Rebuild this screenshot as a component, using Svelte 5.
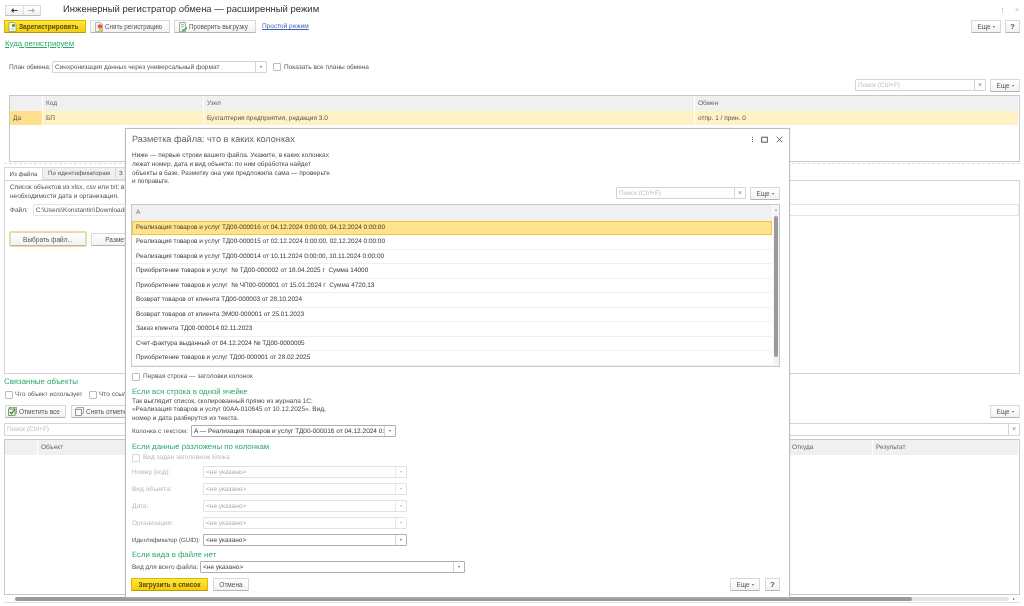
<script>
  const rows = [
    'Реализация товаров и услуг ТД00-000016 от 04.12.2024 0:00:00, 04.12.2024 0:00:00',
    'Реализация товаров и услуг ТД00-000015 от 02.12.2024 0:00:00, 02.12.2024 0:00:00',
    'Реализация товаров и услуг ТД00-000014 от 10.11.2024 0:00:00, 10.11.2024 0:00:00',
    'Приобретение товаров и услуг  № ТД00-000002 от 18.04.2025 г  Сумма 14000',
    'Приобретение товаров и услуг  № ЧП00-000001 от 15.01.2024 г  Сумма 4720,13',
    'Возврат товаров от клиента ТД00-000003 от 28.10.2024',
    'Возврат товаров от клиента ЭМ00-000001 от 25.01.2023',
    'Заказ клиента ТД00-000014 02.11.2023',
    'Счет-фактура выданный от 04.12.2024 № ТД00-0000005',
    'Приобретение товаров и услуг ТД00-000001 от 28.02.2025'
  ];
  const disabledFields = ['Номер (код):', 'Вид объекта:', 'Дата:', 'Организация:'];
</script>

<div class="page">
  <header class="top">
    <div class="nav">
      <span class="nav-btn"><svg width="7" height="5" viewBox="0 0 9 6"><path d="M8.500 3H1.500M3.500 .7 1 3l2.500 2.300" fill="none" stroke="#333" stroke-width="1.300"/></svg></span>
      <span class="nav-btn"><svg width="7" height="5" viewBox="0 0 9 6"><path d="M.5 3h7M5.500 .7 8 3 5.500 5.300" fill="none" stroke="#aaa" stroke-width="1.300"/></svg></span>
    </div>
    <h1>Инженерный регистратор обмена — расширенный режим</h1>
    <span class="spacer"></span>
    <span class="kebab"><i></i><i></i><i></i></span>
    <span class="close-small">×</span>
  </header>

  <div class="toolbar">
    <button class="btn primary reg">
      <svg width="9" height="10" viewBox="0 0 9 10"><path d="M1 .5h5l2 2v7H1z" fill="#fff" stroke="#7a9a5a" stroke-width=".7"/><circle cx="5.500" cy="3.500" r="1.800" fill="#5aa84a"/><path d="M2.500 6.500h4M2.500 8h4" stroke="#bbb" stroke-width=".7"/></svg>
      Зарегистрировать
    </button>
    <button class="btn unreg">
      <svg width="10" height="10" viewBox="0 0 10 10"><path d="M1.500 .5h5l2 2v7h-7z" fill="#f4f4f4" stroke="#999" stroke-width=".7"/><circle cx="6" cy="4.500" r="2.200" fill="#e0573a"/><circle cx="6.500" cy="7.500" r="1.700" fill="#f0c040"/></svg>
      Снять регистрацию
    </button>
    <button class="btn check">
      <svg width="10" height="10" viewBox="0 0 10 10"><path d="M1.500 .5h6v9h-6z" fill="#f4f4f4" stroke="#888" stroke-width=".7"/><path d="M3 2.500h3M3 4.500h3" stroke="#999" stroke-width=".7"/><path d="M4 7l1.500 1.700L9 5.500" fill="none" stroke="#3b9b3b" stroke-width="1.100"/></svg>
      Проверить выгрузку
    </button>
    <a class="simple">Простой режим</a>
    <span class="spacer"></span>
    <button class="btn more">Еще <b class="caret"></b></button>
    <button class="btn help">?</button>
  </div>

  <div class="where">Куда регистрируем</div>

  <div class="plan">
    <span class="lbl plan-lbl">План обмена:</span>
    <div class="field plan-field"><span>Синхронизация данных через универсальный формат</span><b class="drop"><i class="caret"></i></b></div>
    <span class="cb"></span>
    <span class="lbl">Показать все планы обмена</span>
  </div>

  <div class="search-row">
    <div class="field search"><span>Поиск (Ctrl+F)</span><b class="drop x">×</b></div>
    <button class="btn more">Еще <b class="caret"></b></button>
  </div>

  <div class="grid-box plans">
    <div class="g-head">
      <span class="c0"></span><span class="c1">Код</span><span class="c2">Узел</span><span class="c3">Обмен</span>
    </div>
    <div class="g-row">
      <span class="c0 mark">Да</span><span class="c1">БП</span><span class="c2">Бухгалтерия предприятия, редакция 3.0</span><span class="c3">отпр. 1 / прин. 0</span>
    </div>
  </div>

  <div class="dash"></div>

  <div class="tabs">
    <span class="tab on">Из файла</span>
    <span class="tab">По идентификаторам</span>
    <span class="tab">З</span>
  </div>
  <section class="panel">
    <p>Список объектов из xlsx, csv или txt: в<br>необходимости дата и организация.</p>
    <div class="file-row">
      <span class="lbl">Файл:</span>
      <div class="field file"><span>C:\Users\Konstantin\Downloads\</span></div>
    </div>
    <div class="file-btns">
      <button class="btn pick">Выбрать файл...</button>
      <button class="btn mark-up">Разметить</button>
    </div>
  </section>

  <div class="linked">Связанные объекты</div>
  <div class="checks">
    <span class="cb"></span><span class="lbl w1">Что объект использует</span>
    <span class="cb"></span><span class="lbl">Что ссылается</span>
  </div>
  <div class="bar3">
    <button class="btn mark-all">
      <svg width="9" height="9" viewBox="0 0 9 9"><rect x="1.500" y=".5" width="7" height="6" fill="#d8ead0" stroke="#6b8f5a" stroke-width=".7"/><rect x=".5" y="2" width="6.500" height="6.500" fill="#eef5e8" stroke="#557a45" stroke-width=".7"/><path d="M2 5l1.500 1.700L7 2" fill="none" stroke="#2f8f2f" stroke-width="1.200"/></svg>
      Отметить все
    </button>
    <button class="btn un-all">
      <svg width="9" height="9" viewBox="0 0 9 9"><rect x="2" y=".5" width="6.500" height="6" fill="#f2f2f2" stroke="#888" stroke-width=".7"/><rect x=".5" y="2.500" width="6" height="6" fill="#fafafa" stroke="#777" stroke-width=".7"/></svg>
      Снять отметки
    </button>
    <span class="spacer"></span>
    <button class="btn more">Еще <b class="caret"></b></button>
  </div>
  <div class="field wide-search"><span>Поиск (Ctrl+F)</span><b class="drop x">×</b></div>
  <div class="grid-box objects">
    <div class="g-head">
      <span class="o0"></span><span class="o1">Объект</span><span class="o2">Откуда</span><span class="o3">Результат</span>
    </div>
  </div>
  <div class="hscroll"><span class="track"><i></i></span><b class="arrow"></b></div>

  <div class="modal">
    <div class="m-title">
      <h2>Разметка файла: что в каких колонках</h2>
      <span class="spacer"></span>
      <span class="kebab dark"><i></i><i></i><i></i></span>
      <svg class="m-ico" width="7" height="7" viewBox="0 0 7 7"><rect x=".7" y="1.200" width="5.600" height="5" fill="none" stroke="#555" stroke-width="1"/></svg>
      <svg class="m-ico" width="7" height="7" viewBox="0 0 7 7"><path d="M.7.7l5.600 5.600M6.300.7.7 6.300" stroke="#555" stroke-width=".9"/></svg>
    </div>
    <p class="m-desc">Ниже — первые строки вашего файла. Укажите, в каких колонках<br>лежат номер, дата и вид объекта: по ним обработка найдет<br>объекты в базе. Разметку она уже предложила сама — проверьте<br>и поправьте.</p>

    <div class="m-search">
      <div class="field m-s"><span>Поиск (Ctrl+F)</span><b class="drop x">×</b></div>
      <button class="btn more">Еще <b class="caret"></b></button>
    </div>

    <div class="m-table">
      <div class="m-list">
        <div class="m-head">A</div>
        {#each rows as r, i}
          <div class="m-row" class:sel={i === 0}>{r}</div>
        {/each}
      </div>
      <div class="vscroll"><b class="up"></b><i></i></div>
    </div>

    <label class="m-check first"><span class="cb"></span><span class="lbl">Первая строка — заголовки колонок</span></label>

    <h3 class="h-one">Если вся строка в одной ячейке</h3>
    <p class="m-note">Так выглядит список, скопированный прямо из журнала 1С:<br>«Реализация товаров и услуг 00АА-010645 от 10.12.2025». Вид,<br>номер и дата разберутся из текста.</p>
    <div class="f-row column-row">
      <span class="lbl col-lbl">Колонка с текстом:</span>
      <div class="field col-f"><span class="dark-t">A — Реализация товаров и услуг ТД00-000016 от 04.12.2024 0:00:00</span><b class="drop"><i class="caret"></i></b></div>
    </div>

    <h3 class="h-two">Если данные разложены по колонкам</h3>
    <label class="m-check dis"><span class="cb"></span><span class="lbl">Вид задан заголовком блока</span></label>
    <div class="m-fields">
      {#each disabledFields as f}
        <div class="f-row pair dis">
          <span class="lbl">{f}</span>
          <div class="field pf"><span>&lt;не указано&gt;</span><b class="drop"><i class="caret"></i></b></div>
        </div>
      {/each}
      <div class="f-row pair">
        <span class="lbl guid">Идентификатор (GUID):</span>
        <div class="field pf strong"><span class="dark-t">&lt;не указано&gt;</span><b class="drop"><i class="caret"></i></b></div>
      </div>
    </div>

    <h3 class="h-three">Если вида в файле нет</h3>
    <div class="f-row whole">
      <span class="lbl whole-lbl">Вид для всего файла:</span>
      <div class="field whole-f"><span class="dark-t">&lt;не указано&gt;</span><b class="drop"><i class="caret"></i></b></div>
    </div>

    <div class="m-foot">
      <button class="btn primary load">Загрузить в список</button>
      <button class="btn cancel">Отмена</button>
      <span class="spacer"></span>
      <button class="btn more">Еще <b class="caret"></b></button>
      <button class="btn help">?</button>
    </div>
  </div>
</div>

<style>
  :global(body) { margin: 0; background: #fff; }
  .page {
    position: relative; width: 1024px; height: 606px; overflow: hidden; background: #fff;
    font: 6.500px/9px "Liberation Sans", Arial, sans-serif; color: #4a4a4a;
    display: flex; flex-direction: column;
    text-rendering: geometricPrecision; filter: blur(.35px);
  }
  .spacer { flex: 1; }
  p, h1, h2, h3 { margin: 0; font-weight: normal; }
  .lbl { color: #555; white-space: nowrap; }

  .top { display: flex; align-items: center; height: 20px; padding: 0 5px 0 5px; flex: none; }
  .nav { display: flex; width: 36px; height: 11px; background: linear-gradient(#fff, #f0f0f0); border: 1px solid #dcdcdc; border-bottom-color: #bbb; box-sizing: border-box; }
  .nav-btn { flex: 1; display: flex; align-items: center; justify-content: center; }
  .nav-btn + .nav-btn { border-left: 1px solid #ddd; }
  h1 { margin-left: 22px; font-size: 9.500px; line-height: 14px; color: #333; }
  .kebab { display: flex; flex-direction: column; gap: 1px; }
  .kebab i { width: 1px; height: 1px; background: #aaa; display: block; }
  .kebab.dark i { background: #555; }
  .close-small { margin-left: 12px; color: #bbb; font-size: 7px; }

  .btn {
    box-sizing: border-box; height: 13px; padding: 0; margin: 0; border: 1px solid #d8d8d8; border-bottom-color: #b4b4b4;
    background: linear-gradient(#fff, #f2f2f2); border-radius: 1px;
    font: inherit; color: #555; display: flex; align-items: center; justify-content: center; gap: 4px; white-space: nowrap;
  }
  .primary { background: linear-gradient(#fde83c, #f5cc10); border-color: #e0b800; border-bottom-color: #b89800; color: #5a4a10; font-weight: bold; }
  .more { width: 30px; gap: 2px; }
  .caret { display: inline-block; width: 0; height: 0; border: 1.500px solid transparent; border-top: 2px solid #666; border-bottom: 0; }
  .help { width: 15px; font-weight: bold; font-size: 8px; }

  .toolbar { display: flex; align-items: center; padding: 0 4px; gap: 4px; height: 13px; flex: none; }
  .reg { width: 82px; justify-content: flex-start; padding-left: 3px; gap: 2px; }
  .unreg { width: 80px; justify-content: flex-start; padding-left: 3px; gap: 1px; font-size: 6.300px; }
  .check { width: 82px; justify-content: flex-start; padding-left: 3px; gap: 1px; font-size: 6.300px; }
  .simple { margin-left: 2px; color: #3a5fb0; text-decoration: underline; }

  .where { margin: 5px 0 0 5px; height: 11px; font-size: 7.800px; line-height: 11px; color: #2aa868; text-decoration: underline; flex: none; }

  .field { box-sizing: border-box; display: flex; align-items: center; border: 1px solid #d4d4d4; border-radius: 1px; background: #fff; height: 12px; color: #555; flex: none; }
  .field > span { flex: 1; min-width: 0; padding-left: 2px; overflow: hidden; white-space: nowrap; }
  .drop { flex: none; width: 10px; height: 100%; border-left: 1px solid #d4d4d4; display: flex; align-items: center; justify-content: center; font-weight: normal; }
  .drop.x { color: #888; font-size: 7px; }
  .cb { box-sizing: border-box; display: block; flex: none; width: 8px; height: 8px; border: 1px solid #bbb; border-radius: 1px; background: #fff; }

  .plan { display: flex; align-items: center; margin: 12px 0 0 9px; height: 12px; flex: none; }
  .plan-lbl { width: 43px; }
  .plan-field { width: 215px; }
  .plan .cb { margin: 0 3px 0 6px; }

  .search-row { display: flex; justify-content: flex-end; gap: 4px; margin: 6px 4px 0 0; flex: none; height: 13px; }
  .search { width: 131px; }
  .search > span, .wide-search > span, .m-s > span { color: #bdbdbd; }

  .grid-box { box-sizing: border-box; border: 1px solid #c8c8c8; flex: none; }
  .g-head { display: flex; height: 15px; background: #f0f0f0; align-items: center; color: #666; }
  .g-head span { height: 100%; display: flex; align-items: center; padding-left: 3px; box-sizing: border-box; border-right: 1px solid #fff; }
  .g-row { display: flex; height: 14px; background: #fff1c4; align-items: center; color: #555; }
  .g-row span { height: 100%; display: flex; align-items: center; padding-left: 3px; box-sizing: border-box; border-right: 1px solid #fff; }
  .plans { margin: 3px 4px 0 9px; height: 67px; }
  .c0 { width: 33px; }
  .c1 { width: 161px; }
  .c2 { width: 491px; }
  .c3 { flex: 1; }
  .mark { background: #ffdf8c; }

  .dash { margin: 1px 4px 0 4px; height: 0; border-top: 1px dashed #ddd; flex: none; }
  .tabs { display: flex; margin: 3px 0 0 4px; height: 14px; flex: none; font-size: 6.200px; }
  .tab { box-sizing: border-box; height: 13px; padding: 0 5px; display: flex; align-items: center; background: #f0f0f0; color: #555; border: 1px solid #d8d8d8; border-left: 0; white-space: nowrap; }
  .tab.on { background: #fff; border-left: 1px solid #d8d8d8; border-bottom: 0; height: 14px; width: 39px; justify-content: center; padding: 0; }
  .tab:nth-child(2) { width: 73px; justify-content: center; padding: 0; }
  .tab:nth-child(3) { width: 10px; padding: 0 0 0 3px; }

  .panel { box-sizing: border-box; margin: -1px 4px 0 4px; height: 194px; border: 1px solid #d4d4d4; padding: 2px 0 0 5px; flex: none; }
  .panel p { line-height: 9px; color: #555; }
  .file-row { display: flex; align-items: center; margin-top: 3px; height: 12px; }
  .file { margin-left: 5px; width: 986px; border-color: #e4e4e4; }
  .file-btns { display: flex; gap: 5px; margin-top: 16px; align-items: center; }
  .pick { width: 76px; height: 14px; outline: 1.500px solid #f3dd84; }
  .mark-up { width: 60px; }

  .linked { margin: 2px 0 0 4px; height: 12px; font-size: 7.900px; line-height: 12px; color: #2aa868; flex: none; }
  .checks { display: flex; align-items: center; margin: 2px 0 0 5px; height: 9px; flex: none; }
  .checks .cb { margin-right: 2px; }
  .w1 { width: 72px; margin-right: 2px; font-size: 6.400px; }
  .bar3 { display: flex; align-items: center; gap: 5px; margin: 6px 4px 0 5px; height: 13px; flex: none; }
  .mark-all { width: 61px; justify-content: flex-start; padding-left: 2px; gap: 2px; }
  .un-all { width: 80px; justify-content: flex-start; padding-left: 3px; gap: 2px; }
  .wide-search { margin: 5px 4px 0 4px; width: 1016px; height: 13px; }
  .objects { margin: 3px 4px 0 4px; height: 156px; }
  .o0 { width: 33px; }
  .o1 { width: 751px; }
  .o2 { width: 84px; }
  .o3 { flex: 1; }
  .hscroll { display: flex; align-items: center; margin: 1px 4px 0 4px; height: 5px; flex: none; border-bottom: 1px solid #ddd; box-sizing: content-box; padding-bottom: 1px; }
  .track { display: block; margin-left: 11px; width: 994px; height: 4px; background: #e4e4e4; border-radius: 2px; }
  .track i { display: block; width: 897px; height: 4px; background: #9a9a9a; border-radius: 2px; }
  .arrow { margin-left: 4px; width: 0; height: 0; border: 1.500px solid transparent; border-left: 2px solid #666; border-right: 0; }

  .modal {
    position: absolute; left: 125px; top: 128px; width: 665px; height: 471px; box-sizing: border-box;
    background: #fff; border: 1px solid #bdbdbd; border-bottom: 2px solid #a8a8a8; padding: 0 9px 0 5px;
    display: flex; flex-direction: column; box-shadow: 0 0 1px rgba(0,0,0,.2);
  }
  .m-title { display: flex; align-items: center; height: 20px; flex: none; }
  .m-title h2 { font-size: 9.150px; line-height: 14px; color: #666; margin-left: 1px; }
  .m-ico { margin-left: 8px; }
  .m-ico:last-child { margin-right: -3px; }
  .m-desc { margin: 3px 0 0 1px; line-height: 8.800px; color: #4a4a4a; flex: none; height: 36px; font-size: 6.450px; }
  .m-search { display: flex; justify-content: flex-end; gap: 4px; margin-top: -1px; height: 13px; flex: none; }
  .m-s { width: 130px; }
  .m-table { position: relative; margin-top: 4px; height: 163px; border: 1px solid #c8c8c8; box-sizing: border-box; flex: none; display: flex; }
  .m-list { flex: 1; min-width: 0; }
  .m-head { height: 16px; line-height: 15px; padding-left: 4px; background: #f0f0f0; color: #777; }
  .m-row { box-sizing: border-box; height: 14.500px; line-height: 14px; padding-left: 4px; border-bottom: 1px solid #f0f0f0; color: #404040; white-space: pre; font-size: 6.430px; }
  .m-row.sel { background: #ffe38c; border: 1px solid #f2c53d; padding-left: 3px; height: 14px; line-height: 12.500px; color: #4d4420; }
  .vscroll { flex: none; width: 6px; position: relative; background: #f4f4f4; margin-left: 1px; }
  .vscroll i { position: absolute; top: 11px; left: 1px; width: 4px; height: 141px; background: #9a9a9a; border-radius: 2px; }
  .up { position: absolute; top: 4px; left: 1.500px; width: 0; height: 0; border: 1.500px solid transparent; border-bottom: 2px solid #888; border-top: 0; }

  .m-check { display: flex; align-items: center; gap: 3px; height: 9px; flex: none; }
  .first { margin: 5px 0 0 1px; }
  .dis .lbl, .dis { color: #b8b8b8; }
  .dis .field { border-color: #e2e2e2; }
  .dis .field > span { color: #aaa; }
  .dis .drop { border-left-color: #e8e8e8; }
  .dis .caret { border-top-color: #bbb; }
  .dis .cb { border-color: #d8d8d8; }

  h3 { font-size: 7.800px; line-height: 11px; color: #2aa868; margin-left: 1px; flex: none; }
  .h-one { margin-top: 5px; height: 11px; }
  .m-note { margin: 1px 0 0 1px; line-height: 8.400px; flex: none; color: #4a4a4a; }
  .f-row { display: flex; align-items: center; flex: none; }
  .column-row { margin: 2px 0 0 1px; height: 12px; }
  .col-lbl { width: 59px; font-size: 6.350px; }
  .col-f { width: 205px; border-color: #b0b0b0; }
  .dark-t { color: #3a3a3a; }
  .h-two { margin-top: 4px; height: 11px; }
  .m-check.dis { margin: 1px 0 0 1px; }
  .m-fields { display: flex; flex-direction: column; gap: 5px; margin: 4px 0 0 1px; flex: none; }
  .pair { height: 12px; }
  .pair .lbl { width: 71px; }
  .pair .guid { font-size: 6.150px; }
  .pf { width: 204px; }
  .pf.strong, .whole-f { border-color: #b0b0b0; }
  .h-three { margin-top: 3px; height: 11px; }
  .whole { margin: 1px 0 0 1px; height: 12px; }
  .whole-lbl { width: 68px; }
  .whole-f { width: 265px; }
  .m-foot { display: flex; align-items: center; gap: 5px; margin-top: 5px; height: 13px; flex: none; }
  .load { width: 77px; }
  .cancel { width: 36px; }
</style>
